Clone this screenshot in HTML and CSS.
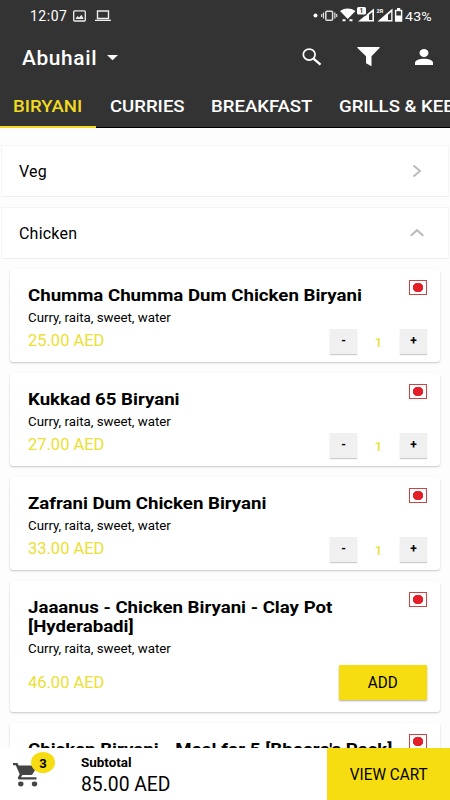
FILE: index.html
```html
<!DOCTYPE html>
<html lang="en">
<head>
<meta charset="utf-8">
<title>Abuhail menu</title>
<link rel="stylesheet" href="styles.css">
</head>
<body>
<div class="app">
  <header class="header">
    <div class="status">
      <span class="clock">12:07</span>
      <svg class="st-image" width="13" height="12" viewBox="0 0 13 12"><rect x=".7" y=".8" width="11.6" height="10.2" rx="1" fill="none" stroke="#eee" stroke-width="1.3"/><path d="M2.5 9l2-3 1.6 1.6L8.500 4.800 10.700 9z" fill="#eee"/></svg>
      <svg class="st-laptop" width="16" height="12" viewBox="0 0 16 12"><path d="M2.500 1h11v7.500h-11zM0 10.400h16" fill="none" stroke="#eee" stroke-width="1.400"/></svg>
      <svg class="st-right" width="90" height="18" viewBox="0 0 90 18" fill="#fff">
        <circle cx="2.500" cy="8.500" r="2"/>
        <rect x="12.800" y="4.300" width="6.800" height="8.900" rx="1" fill="none" stroke="#ddd" stroke-width="1.500"/>
        <path d="M10.500 5.500v6M8.700 7v3M21.900 5.500v6M23.700 7v3" stroke="#ddd" stroke-width="1.200"/>
        <path d="M27 4Q34.500-.8 42.500 4L34.700 12z"/>
        <path d="M29.500 12.300h3v2h-3zM36.500 12.300h3v2h-3z"/>
        <path d="M45 14.500L61 1.500v13z"/><path d="M56 7.800L59.400 5v8h-3.400z" fill="#333"/>
        <rect x="43.500" y="-.5" width="10" height="9" fill="#333"/>
        <rect x="44" y="0" width="9" height="7.500" rx="1.500"/>
        <text x="46.600" y="6.300" class="sim1">1</text>
        <path d="M64.500 14.500L79.500 1.500v13z"/><path d="M75 7.800L78.200 5v8H75z" fill="#333"/>
        <text x="63.500" y="5.500" class="sim2">2R</text>
        <rect x="82.600" y="3.500" width="6" height="10.300" fill="none" stroke="#fff" stroke-width="1.400"/><path d="M84 1h3.200v2.500H84zM82 8.500h7v6h-7z"/>
      </svg>
      <span class="battery">43%</span>
    </div>
    <div class="bar">
      <span class="place">Abuhail</span>
      <svg class="caret" width="11" height="6" viewBox="0 0 11 6"><path d="M0 0h11L5.500 5.300z" fill="#fff"/></svg>
      <svg class="ic-search" width="20" height="18" viewBox="0 0 20 18" fill="none" stroke="#fff"><ellipse cx="7.200" cy="6.600" rx="5.900" ry="5.500" stroke-width="1.700"/><path d="M11.500 10.600L18.500 16.700" stroke-width="2.300"/></svg>
      <svg class="ic-filter" width="23" height="20" viewBox="0 0 23 20"><path d="M.8 0h21.400q.9.200.3 1L14.500 9.200v10L9 16.200V9.200L.5 1Q0 .2.800 0z" fill="#fff"/></svg>
      <svg class="ic-user" width="18" height="16" viewBox="0 0 18 16" fill="#fff"><ellipse cx="9" cy="4" rx="4.500" ry="4"/><path d="M0 16v-2.300C0 11 5 9.700 9 9.700s9 1.300 9 4V16z"/></svg>
    </div>
    <nav class="tabs">
      <span class="tab active"><span>BIRYANI</span></span>
      <span class="tab second"><span>CURRIES</span></span>
      <span class="tab third"><span>BREAKFAST</span></span>
      <span class="tab"><span>GRILLS &amp; KEBABS</span></span>
    </nav>
  </header>
  <main class="content">
    <div class="group veg"><span>Veg</span><svg width="14" height="14" viewBox="0 0 14 14"><path d="M3.500 1.500L10 7l-6.500 5.500"/></svg></div>
    <div class="group"><span>Chicken</span><svg width="14" height="14" viewBox="0 0 14 14"><path d="M.7 9.800L7 4.200l6.300 5.600"/></svg></div>
    <section class="list">
      <article class="card">
        <h3>Chumma Chumma Dum Chicken Biryani</h3><i class="mark"></i>
        <p class="desc">Curry, raita, sweet, water</p>
        <div class="row"><span class="price">25.00 AED</span><div class="qty"><b>-</b><em>1</em><b>+</b></div></div>
      </article>
      <article class="card">
        <h3>Kukkad 65 Biryani</h3><i class="mark"></i>
        <p class="desc">Curry, raita, sweet, water</p>
        <div class="row"><span class="price">27.00 AED</span><div class="qty"><b>-</b><em>1</em><b>+</b></div></div>
      </article>
      <article class="card">
        <h3>Zafrani Dum Chicken Biryani</h3><i class="mark"></i>
        <p class="desc">Curry, raita, sweet, water</p>
        <div class="row"><span class="price">33.00 AED</span><div class="qty"><b>-</b><em>1</em><b>+</b></div></div>
      </article>
      <article class="card tall">
        <h3>Jaaanus - Chicken Biryani - Clay Pot<br>[Hyderabadi]</h3><i class="mark"></i>
        <p class="desc">Curry, raita, sweet, water</p>
        <div class="row"><span class="price">46.00 AED</span><div class="add"><span>ADD</span></div></div>
      </article>
      <article class="card">
        <h3>Chicken Biryani - Meal for 5 [Bheere's Pack]</h3><i class="mark"></i>
      </article>
    </section>
  </main>
  <footer class="footer">
    <div class="cart">
      <svg width="25" height="25" viewBox="0 0 25 25" fill="#444"><path d="M0 0h4.500l1.200 2.500h17.800q1 .2.500 1.200l-4.300 7.200q-.6 1-1.800 1H9.300L8 14.200h15.500v2.200H6.200q-2-.3-1.200-2.200l1.700-3L2.800 2.200H0z"/><ellipse cx="7.800" cy="21" rx="2.700" ry="2.400"/><ellipse cx="21.500" cy="21" rx="2.700" ry="2.400"/></svg>
      <span class="badge">3</span>
    </div>
    <div class="total"><span class="sub">Subtotal</span><span class="sum">85.00 AED</span></div>
    <div class="view"><span>VIEW CART</span></div>
  </footer>
</div>
</body>
</html>
```
FILE: styles.css
```css
* { box-sizing: border-box; margin: 0; padding: 0; }
body { width: 450px; height: 800px; overflow: hidden; background: #fdfdfd; font-family: Roboto, sans-serif; color: #000; }
span, h3, p { white-space: nowrap; }
svg { display: block; flex: none; }
.app { height: 800px; display: flex; flex-direction: column; }
.header { height: 128px; flex: none; background: #333; color: #fff; overflow: hidden; }
.status { height: 32px; display: flex; align-items: center; padding-left: 30px; }
.clock { width: 43px; font-size: 14px; letter-spacing: .5px; }
.st-laptop { margin-left: 9px; }
.st-right { margin: -1px 2px 0 auto; overflow: visible; }
.sim1 { font: 700 6.500px Roboto; fill: #333; }
.sim2 { font: 700 5.500px Roboto; fill: #fff; }
.battery { width: 45px; font-size: 13.500px; letter-spacing: .2px; transform: scaleX(1.05); transform-origin: 0 0; }
.bar { height: 51px; display: flex; align-items: center; padding-left: 22px; }
.place { width: 85px; font-size: 20px; font-weight: 500; letter-spacing: .6px; transform: scaleX(1.045); transform-origin: 0 0; }
.ic-search { margin: -2px 0 0 184px; }
.ic-filter { margin: -1px 0 0 35px; }
.ic-user { margin: -1px 0 0 35px; }
.tabs { display: flex; height: 45px; font-size: 16px; font-weight: 500; border-bottom: 1px solid #000; }
.tab { flex: none; padding: 14px 0 0 14px; line-height: 19px; }
.tab.active { color: #f0db21; border-bottom: 2px solid #f0db21; width: 96px; height: 45px; padding-left: 13px; }
.tab.second { width: 101px; }
.tab.third { width: 128px; }
.tab > span { display: inline-block; transform: scaleX(1.16); transform-origin: 0 0; }
.content { flex: 1; overflow: hidden; padding: 17px 0 0; }
.group { height: 52px; margin: 0 1px 10px 1px; padding: 0 24px 0 17px; display: flex; align-items: center; justify-content: space-between; background: #fff; border: 1px solid #f5f5f5; border-bottom-color: #eee; font-size: 16px; letter-spacing: .2px; }
.group svg { fill: none; stroke: #bbb; stroke-width: 2; }
.list { padding: 0 10px; }
.card { position: relative; height: 93px; margin-bottom: 11px; padding: 17px 13px 0 18px; background: #fff; border-radius: 3px; box-shadow: 0 1px 2px rgba(0,0,0,.22); }
.card.tall { height: 131px; }
h3 { font-size: 16px; line-height: 19px; font-weight: 700; transform-origin: 0 0; transform: scaleX(1.165); width: 300px; }
.mark { position: absolute; right: 13px; top: 11px; width: 18px; height: 15px; border: 1px solid #c44; background: radial-gradient(ellipse 5.500px 5px at center, #e3202a 90%, #fff); }
.desc { font-size: 12px; line-height: 14px; margin-top: 6px; transform: scaleX(1.105); transform-origin: 0 0; }
.row { display: flex; justify-content: space-between; height: 26px; margin-top: 4px; }
.price { color: #eadf32; font-size: 16px; line-height: 24px; transform: scaleX(1.03); transform-origin: 0 0; }
.qty { display: flex; font-size: 12px; text-align: center; line-height: 25px; }
.qty b { width: 27px; height: 25px; background: #f0f0f0; box-shadow: 0 1px 1px #ccc; }
.qty em { width: 43px; font-style: normal; font-weight: 500; font-size: 13px; line-height: 27px; color: #eadf32; }
.tall .row { margin-top: 9px; height: 35px; align-items: center; }
.add { width: 88px; height: 35px; background: #f6dd12; line-height: 36px; text-align: center; font-size: 16px; box-shadow: 0 1px 2px #aaa; border-radius: 1px; }
.add span { display: inline-block; transform: scaleX(.95); }
.footer { height: 52px; flex: none; display: flex; background: #fff; }
.cart { position: relative; width: 81px; padding: 15px 0 0 13px; }
.badge { position: absolute; left: 31px; top: 4px; width: 24px; height: 21px; border-radius: 50%; background: #f6dd12; font-weight: 700; font-size: 13px; line-height: 24px; text-align: center; }
.total { width: 246px; display: flex; flex-direction: column; }
.sub { font-size: 12px; font-weight: 700; line-height: 14px; margin-top: 8px; transform: scaleX(1.12); transform-origin: 0 0; }
.sum { font-size: 20px; line-height: 24px; margin-top: 2px; transform: scaleX(.965); transform-origin: 0 0; }
.view { flex: 1; background: #f6dd12; text-align: center; line-height: 54px; font-size: 16px; }
.view span { display: inline-block; transform: scaleX(.955); }
```
